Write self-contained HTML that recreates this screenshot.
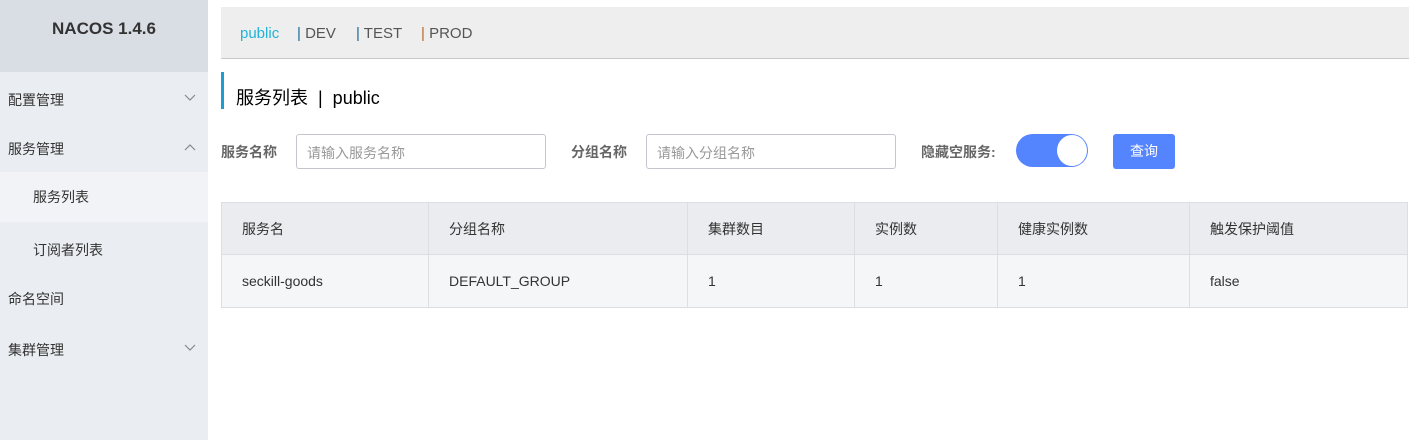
<!DOCTYPE html>
<html><head><meta charset="utf-8"><style>
*{margin:0;padding:0;box-sizing:border-box}
body{width:1409px;height:440px;background:#fff;font-family:"Liberation Sans","Noto Sans CJK SC",sans-serif;font-size:14px;color:#333;position:relative;overflow:hidden}
.a{position:absolute;white-space:nowrap}
.side{position:absolute;left:0;top:0;width:208px;height:440px;background:#eaedf1}
.logo{position:absolute;left:0;top:0;width:208px;height:72px;background:#d9dde4;font-weight:bold;font-size:17px;color:#333;text-align:center;line-height:58px}
.mi{position:absolute;left:0;width:208px;height:50px;line-height:50px;padding-left:8px;color:#333;font-size:14px}
.sub{padding-left:33px}
.chev{position:absolute;right:12px;top:0;color:#888;font-size:12px}
.tbl{position:absolute;left:221px;top:202px;width:1187px;border-collapse:collapse;font-size:14px}
.tbl td{border:1px solid #dcdee3;padding-left:20px;color:#333}
.tbl tr.h td{background:#ebecf0;height:52px}
.tbl tr.b td{background:#f5f6f7;height:53px}
.inp{position:absolute;top:134px;height:35px;border:1px solid #c4c6cf;border-radius:3px;color:#999;padding-left:10px;line-height:37px;font-size:14px}
.lab{position:absolute;top:142px;font-weight:bold;color:#666;font-size:14px}
.nav{font-size:15px;top:25px}
</style></head><body>
<div class="side">
<div class="logo">NACOS 1.4.6</div>
<div class="mi" style="top:75px">配置管理<svg class="chev" style="top:19px" width="12" height="8" viewBox="0 0 12 8"><path d="M1 1L6 6L11 1" fill="none" stroke="#888" stroke-width="1.2"/></svg></div>
<div class="mi" style="top:124px">服务管理<svg class="chev" style="top:19px" width="12" height="8" viewBox="0 0 12 8"><path d="M1 7L6 2L11 7" fill="none" stroke="#888" stroke-width="1.2"/></svg></div>
<div class="mi sub" style="top:172px;background:#f2f3f6">服务列表</div>
<div class="mi sub" style="top:225px">订阅者列表</div>
<div class="mi" style="top:274px">命名空间</div>
<div class="mi" style="top:325px">集群管理<svg class="chev" style="top:19px" width="12" height="8" viewBox="0 0 12 8"><path d="M1 1L6 6L11 1" fill="none" stroke="#888" stroke-width="1.2"/></svg></div>
</div>
<div class="a" style="left:221px;top:7px;width:1188px;height:52px;background:#eeeeee;border-bottom:1px solid #c8c8c8"></div>
<div class="a nav" style="left:240px;color:#1fb5d8">public</div>
<div class="a nav" style="left:297px;color:#555"><span style="color:#1a6a9a">|</span> DEV</div>
<div class="a nav" style="left:356px;color:#555"><span style="color:#1a6a9a">|</span> TEST</div>
<div class="a nav" style="left:421px;color:#555"><span style="color:#b8662a">|</span> PROD</div>
<div class="a" style="left:221px;top:72px;width:3px;height:37px;background:#1a9fd0"></div>
<div class="a" style="left:236px;top:84px;font-size:18px;color:#000">服务列表 &nbsp;|&nbsp; public</div>
<div class="lab" style="left:221px">服务名称</div>
<div class="inp" style="left:296px;width:250px">请输入服务名称</div>
<div class="lab" style="left:571px">分组名称</div>
<div class="inp" style="left:646px;width:250px">请输入分组名称</div>
<div class="lab" style="left:921px">隐藏空服务:</div>
<div class="a" style="left:1016px;top:134px;width:72px;height:33px;border-radius:17px;background:#5584ff"></div>
<div class="a" style="left:1057px;top:135px;width:30px;height:31px;border-radius:50%;background:#fff"></div>
<div class="a" style="left:1113px;top:134px;width:62px;height:35px;border-radius:3px;background:#5584ff;color:#fff;text-align:center;line-height:35px">查询</div>
<table class="tbl">
<tr class="h"><td style="width:207px">服务名</td><td style="width:259px">分组名称</td><td style="width:167px">集群数目</td><td style="width:143px">实例数</td><td style="width:192px">健康实例数</td><td>触发保护阈值</td></tr>
<tr class="b"><td>seckill-goods</td><td>DEFAULT_GROUP</td><td>1</td><td>1</td><td>1</td><td>false</td></tr>
</table>
</body></html>
